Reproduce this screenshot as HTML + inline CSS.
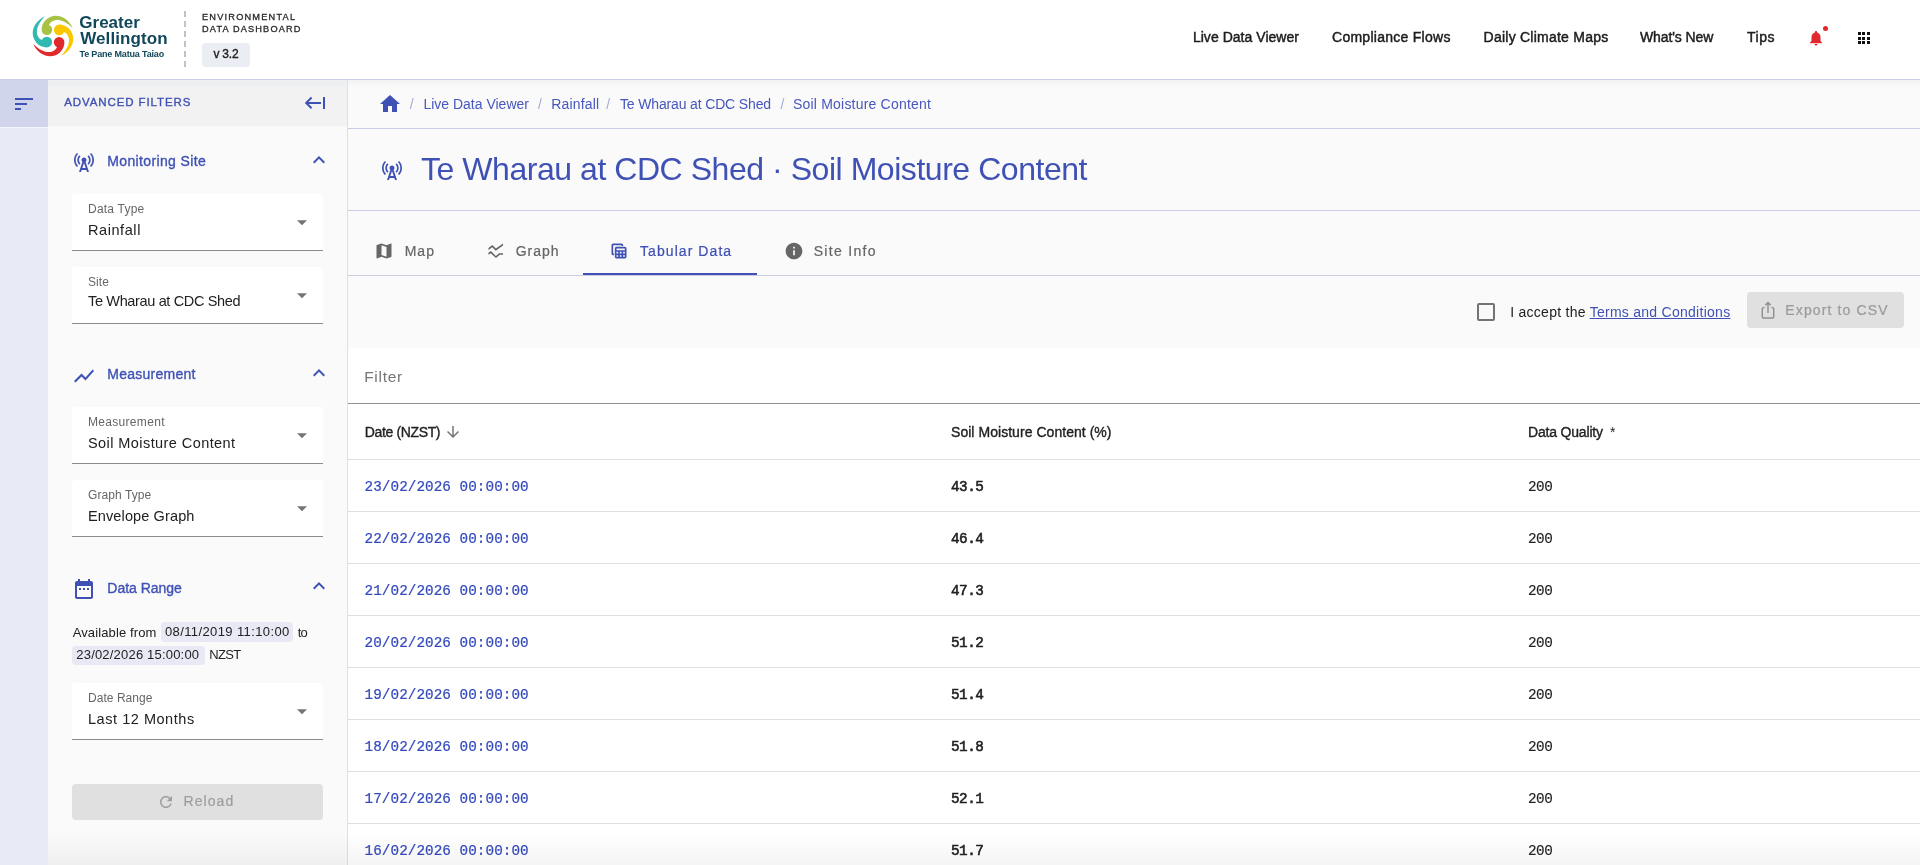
<!DOCTYPE html>
<html><head><meta charset="utf-8"><title>Environmental Data Dashboard</title>
<style>
html,body{margin:0;padding:0;width:1920px;height:865px;overflow:hidden;background:#fafafa;font-family:"Liberation Sans",sans-serif}
.t{position:absolute;white-space:nowrap}
svg{display:block}
</style></head><body><div style="position:absolute;left:0;top:0;width:1920px;height:865px;will-change:transform">
<div style="position:absolute;left:0px;top:0px;width:1920px;height:79px;background:#fff"></div>
<div style="position:absolute;left:0px;top:79px;width:1920px;height:1px;background:#c9cde8"></div>
<div style="position:absolute;left:0px;top:80px;width:48px;height:785px;background:#e8eaf6"></div>
<div style="position:absolute;left:0px;top:80px;width:48px;height:47px;background:#d1d5ec"></div>
<div style="position:absolute;left:0px;top:127px;width:48px;height:1px;background:#f4f5fb"></div>
<div style="position:absolute;left:48px;top:80px;width:299px;height:785px;background:#fafafa"></div>
<div style="position:absolute;left:48px;top:80px;width:299px;height:46px;background:#f2f2f2"></div>
<div style="position:absolute;left:48px;top:80px;width:299px;height:6px;background:#eeeff1"></div>
<div style="position:absolute;left:347px;top:80px;width:1px;height:785px;background:#e0e0e0"></div>
<div style="position:absolute;left:348px;top:80px;width:1572px;height:785px;background:#fafafa"></div>
<div style="position:absolute;left:348px;top:80px;width:1572px;height:8px;background:linear-gradient(#f3f3f4,#fafafa)"></div>
<div style="position:absolute;left:348px;top:128px;width:1572px;height:1px;background:#c9cde8"></div>
<div style="position:absolute;left:348px;top:210px;width:1572px;height:1px;background:#c9cde8"></div>
<div style="position:absolute;left:348px;top:275px;width:1572px;height:1px;background:#c9cde8"></div>
<div style="position:absolute;left:583px;top:273px;width:174px;height:2px;background:#3f51b5"></div>
<div style="position:absolute;left:348px;top:348px;width:1572px;height:517px;background:#fff;border-top-left-radius:4px"></div>
<div style="position:absolute;left:348px;top:403px;width:1572px;height:1px;background:#8f8f8f"></div>
<div style="position:absolute;left:348px;top:459px;width:1572px;height:1px;background:#e0e0e0"></div>
<div style="position:absolute;left:348px;top:511px;width:1572px;height:1px;background:#e0e0e0"></div>
<div style="position:absolute;left:348px;top:563px;width:1572px;height:1px;background:#e0e0e0"></div>
<div style="position:absolute;left:348px;top:615px;width:1572px;height:1px;background:#e0e0e0"></div>
<div style="position:absolute;left:348px;top:667px;width:1572px;height:1px;background:#e0e0e0"></div>
<div style="position:absolute;left:348px;top:719px;width:1572px;height:1px;background:#e0e0e0"></div>
<div style="position:absolute;left:348px;top:771px;width:1572px;height:1px;background:#e0e0e0"></div>
<div style="position:absolute;left:348px;top:823px;width:1572px;height:1px;background:#e0e0e0"></div>
<svg style="position:absolute;left:28px;top:11px" width="50" height="50" viewBox="-25 -25 50 50"><path fill="#a7c244" fill-rule="nonzero" transform="rotate(0)" d="M19.8,-8 C16,-16.2 9,-20.2 3,-20.3 C-5,-20.2 -11.4,-14 -11.4,-6.2 L-6.1,-6.2 L-4,-11 C-2,-16 7,-20.5 19.8,-8 Z M-11.4,-6.2 A5.3,5.3 0 1 0 -0.8,-6.2 A5.3,5.3 0 1 0 -11.4,-6.2 Z"/><path fill="#f9c800" fill-rule="nonzero" transform="rotate(90)" d="M19.8,-8 C16,-16.2 9,-20.2 3,-20.3 C-5,-20.2 -11.4,-14 -11.4,-6.2 L-6.1,-6.2 L-4,-11 C-2,-16 7,-20.5 19.8,-8 Z M-11.4,-6.2 A5.3,5.3 0 1 0 -0.8,-6.2 A5.3,5.3 0 1 0 -11.4,-6.2 Z"/><path fill="#e0292b" fill-rule="nonzero" transform="rotate(180)" d="M19.8,-8 C16,-16.2 9,-20.2 3,-20.3 C-5,-20.2 -11.4,-14 -11.4,-6.2 L-6.1,-6.2 L-4,-11 C-2,-16 7,-20.5 19.8,-8 Z M-11.4,-6.2 A5.3,5.3 0 1 0 -0.8,-6.2 A5.3,5.3 0 1 0 -11.4,-6.2 Z"/><path fill="#2fb9b1" fill-rule="nonzero" transform="rotate(270)" d="M19.8,-8 C16,-16.2 9,-20.2 3,-20.3 C-5,-20.2 -11.4,-14 -11.4,-6.2 L-6.1,-6.2 L-4,-11 C-2,-16 7,-20.5 19.8,-8 Z M-11.4,-6.2 A5.3,5.3 0 1 0 -0.8,-6.2 A5.3,5.3 0 1 0 -11.4,-6.2 Z"/></svg>
<div class="t" id="lg1" style="left:79.3px;top:13.13px;font-size:17px;line-height:19.55px;font-weight:700;color:#11475a;letter-spacing:0.0px;font-family:'Liberation Sans', sans-serif;">Greater</div>
<div class="t" id="lg2" style="left:80.2px;top:29.43px;font-size:17px;line-height:19.55px;font-weight:700;color:#11475a;letter-spacing:0.11px;font-family:'Liberation Sans', sans-serif;">Wellington</div>
<div class="t" id="lg3" style="left:79.5px;top:49.41px;font-size:9px;line-height:10.35px;font-weight:700;color:#11475a;letter-spacing:-0.167px;font-family:'Liberation Sans', sans-serif;">Te Pane Matua Taiao</div>
<div style="position:absolute;left:184px;top:11px;width:2px;height:56px;background:repeating-linear-gradient(#c2c2c2 0,#c2c2c2 6px,transparent 6px,transparent 10px)"></div>
<div class="t" id="env1" style="left:202px;top:11.92px;font-size:9.2px;line-height:10.58px;font-weight:400;color:#2a2a2a;letter-spacing:1.216px;font-family:'Liberation Sans', sans-serif;-webkit-text-stroke:0.3px currentColor;">ENVIRONMENTAL</div>
<div class="t" id="env2" style="left:202px;top:24.02px;font-size:9.2px;line-height:10.58px;font-weight:400;color:#2a2a2a;letter-spacing:1.154px;font-family:'Liberation Sans', sans-serif;-webkit-text-stroke:0.3px currentColor;">DATA DASHBOARD</div>
<div style="position:absolute;left:202px;top:43px;width:48px;height:24px;background:#ebedf4;border-radius:4px"></div>
<div class="t" id="ver" style="left:213.4px;top:47.84px;font-size:12px;line-height:13.8px;font-weight:400;color:#212121;letter-spacing:-0.2px;font-family:'Liberation Sans', sans-serif;-webkit-text-stroke:0.35px currentColor;">v 3.2</div>
<div class="t" id="nav0" style="left:1192.9px;top:29.20px;font-size:14px;line-height:16.1px;font-weight:400;color:#1c1c1c;letter-spacing:0.034px;font-family:'Liberation Sans', sans-serif;-webkit-text-stroke:0.45px currentColor;">Live Data Viewer</div>
<div class="t" id="nav1" style="left:1332px;top:29.20px;font-size:14px;line-height:16.1px;font-weight:400;color:#1c1c1c;letter-spacing:0.267px;font-family:'Liberation Sans', sans-serif;-webkit-text-stroke:0.45px currentColor;">Compliance Flows</div>
<div class="t" id="nav2" style="left:1483.6px;top:29.20px;font-size:14px;line-height:16.1px;font-weight:400;color:#1c1c1c;letter-spacing:0.237px;font-family:'Liberation Sans', sans-serif;-webkit-text-stroke:0.45px currentColor;">Daily Climate Maps</div>
<div class="t" id="nav3" style="left:1640px;top:29.20px;font-size:14px;line-height:16.1px;font-weight:400;color:#1c1c1c;letter-spacing:-0.111px;font-family:'Liberation Sans', sans-serif;-webkit-text-stroke:0.45px currentColor;">What's New</div>
<div class="t" id="nav4" style="left:1747px;top:29.20px;font-size:14px;line-height:16.1px;font-weight:400;color:#1c1c1c;letter-spacing:0.5px;font-family:'Liberation Sans', sans-serif;-webkit-text-stroke:0.45px currentColor;">Tips</div>
<svg style="position:absolute;left:1807px;top:29.1px;" width="18" height="18" viewBox="0 0 24 24"><path fill="#e0282e" d="M12 22c1.1 0 2-.9 2-2h-4c0 1.1.89 2 2 2zm6-6v-5c0-3.07-1.64-5.64-4.5-6.32V4c0-.83-.67-1.5-1.5-1.5s-1.5.67-1.5 1.5v.68C7.63 5.36 6 7.92 6 11v5l-2 2v1h16v-1l-2-2z"/></svg>
<div style="position:absolute;left:1822.9px;top:25.8px;width:5.2px;height:5.2px;border-radius:50%;background:#e0282e"></div>
<div style="position:absolute;left:1858.0px;top:32.0px;width:3px;height:3px;background:#111"></div>
<div style="position:absolute;left:1862.3px;top:32.0px;width:3px;height:3px;background:#111"></div>
<div style="position:absolute;left:1867.0px;top:32.0px;width:3px;height:3px;background:#111"></div>
<div style="position:absolute;left:1858.0px;top:36.5px;width:3px;height:3px;background:#111"></div>
<div style="position:absolute;left:1862.3px;top:36.5px;width:3px;height:3px;background:#111"></div>
<div style="position:absolute;left:1867.0px;top:36.5px;width:3px;height:3px;background:#111"></div>
<div style="position:absolute;left:1858.0px;top:41.0px;width:3px;height:3px;background:#111"></div>
<div style="position:absolute;left:1862.3px;top:41.0px;width:3px;height:3px;background:#111"></div>
<div style="position:absolute;left:1867.0px;top:41.0px;width:3px;height:3px;background:#111"></div>
<svg style="position:absolute;left:12px;top:92px;" width="24" height="24" viewBox="0 0 24 24"><path fill="#3f51b5" d="M3 18h6v-2H3v2zM3 6v2h18V6H3zm0 7h12v-2H3v2z"/></svg>
<div class="t" id="adv" style="left:64.2px;top:96.01px;font-size:11.5px;line-height:13.22px;font-weight:400;color:#3f51b5;letter-spacing:0.899px;font-family:'Liberation Sans', sans-serif;-webkit-text-stroke:0.35px currentColor;">ADVANCED FILTERS</div>
<svg style="position:absolute;left:300px;top:90px" width="30" height="24" viewBox="0 0 30 24"><path fill="none" stroke="#3f51b5" stroke-width="2" d="M6.5 12.9H21M11.6 7.5L6.2 12.9L11.6 18.3"/><rect x="23" y="7" width="2" height="12" fill="#3f51b5"/></svg>
<svg style="position:absolute;left:72px;top:150px;" width="24" height="24" viewBox="0 0 24 24"><path fill="#3f51b5" d="M7.3 14.7l1.2-1.2c-1-1-1.5-2.3-1.5-3.5 0-1.3.5-2.6 1.5-3.5L7.3 5.3c-1.3 1.3-2 3-2 4.7s.7 3.4 2 4.7zM19.1 2.9l-1.2 1.2c1.6 1.6 2.4 3.8 2.4 5.9 0 2.1-.8 4.3-2.4 5.9l1.2 1.2c2-2 2.9-4.5 2.9-7.1 0-2.6-1-5.1-2.9-7.1zM6.1 4.1L4.9 2.9C3 4.9 2 7.4 2 10c0 2.6 1 5.1 2.9 7.1l1.2-1.2c-1.6-1.6-2.4-3.8-2.4-5.9 0-2.1.8-4.3 2.4-5.9zM16.7 14.7c1.3-1.3 2-3 2-4.7-.1-1.7-.7-3.4-2-4.7l-1.2 1.2c1 1 1.5 2.3 1.5 3.5 0 1.3-.5 2.6-1.5 3.5l1.2 1.2zM14.5 10c0-1.38-1.12-2.5-2.5-2.5S9.5 8.62 9.5 10c0 .76.34 1.42.87 1.88L7 22h2l.67-2h4.67l.66 2h2l-3.37-10.12c.53-.46.87-1.12.87-1.88zm-4.17 8L12 13l1.67 5h-3.34z"/></svg>
<div class="t" id="sec1" style="left:107.3px;top:153.10px;font-size:14px;line-height:16.1px;font-weight:400;color:#3f51b5;letter-spacing:0.358px;font-family:'Liberation Sans', sans-serif;-webkit-text-stroke:0.35px currentColor;">Monitoring Site</div>
<svg style="position:absolute;left:307px;top:148px;" width="24" height="24" viewBox="0 0 24 24"><path fill="#3f51b5" d="M12 8l-6 6 1.41 1.41L12 10.83l4.59 4.58L18 14z"/></svg>
<div style="position:absolute;left:72px;top:194px;width:251px;height:56px;background:#fff;border-radius:4px 4px 0 0;border-bottom:1px solid #8c8c8c;box-sizing:border-box;height:57px"></div>
<div class="t" id="l1" style="left:88px;top:202.54px;font-size:12px;line-height:13.8px;font-weight:400;color:#666;letter-spacing:0.225px;font-family:'Liberation Sans', sans-serif;">Data Type</div>
<div class="t" id="v1" style="left:88px;top:222.44px;font-size:14.5px;line-height:16.67px;font-weight:400;color:#212121;letter-spacing:0.572px;font-family:'Liberation Sans', sans-serif;">Rainfall</div>
<svg style="position:absolute;left:297px;top:219.5px" width="10" height="5.5" viewBox="0 0 10 5"><path fill="#757575" d="M0 0h10L5 5z"/></svg>
<div style="position:absolute;left:72px;top:267px;width:251px;height:56px;background:#fff;border-radius:4px 4px 0 0;border-bottom:1px solid #8c8c8c;box-sizing:border-box;height:57px"></div>
<div class="t" id="l2" style="left:88px;top:275.74px;font-size:12px;line-height:13.8px;font-weight:400;color:#666;letter-spacing:0.1px;font-family:'Liberation Sans', sans-serif;">Site</div>
<div class="t" id="v2" style="left:88px;top:293.14px;font-size:14.5px;line-height:16.67px;font-weight:400;color:#212121;letter-spacing:-0.35px;font-family:'Liberation Sans', sans-serif;">Te Wharau at CDC Shed</div>
<svg style="position:absolute;left:297px;top:292.5px" width="10" height="5.5" viewBox="0 0 10 5"><path fill="#757575" d="M0 0h10L5 5z"/></svg>
<svg style="position:absolute;left:72px;top:363.5px;" width="24" height="24" viewBox="0 0 24 24"><path fill="#3f51b5" d="M3.5 18.49l6-6.01 4 4L22 6.92l-1.41-1.41-7.09 7.97-4-4L2 16.99z"/></svg>
<div class="t" id="sec2" style="left:107.3px;top:366.20px;font-size:14px;line-height:16.1px;font-weight:400;color:#3f51b5;letter-spacing:0.25px;font-family:'Liberation Sans', sans-serif;-webkit-text-stroke:0.35px currentColor;">Measurement</div>
<svg style="position:absolute;left:307px;top:361px;" width="24" height="24" viewBox="0 0 24 24"><path fill="#3f51b5" d="M12 8l-6 6 1.41 1.41L12 10.83l4.59 4.58L18 14z"/></svg>
<div style="position:absolute;left:72px;top:407px;width:251px;height:56px;background:#fff;border-radius:4px 4px 0 0;border-bottom:1px solid #8c8c8c;box-sizing:border-box;height:57px"></div>
<div class="t" id="l3" style="left:88px;top:415.74px;font-size:12px;line-height:13.8px;font-weight:400;color:#666;letter-spacing:0.31px;font-family:'Liberation Sans', sans-serif;">Measurement</div>
<div class="t" id="v3" style="left:88px;top:435.14px;font-size:14.5px;line-height:16.67px;font-weight:400;color:#212121;letter-spacing:0.425px;font-family:'Liberation Sans', sans-serif;">Soil Moisture Content</div>
<svg style="position:absolute;left:297px;top:432.5px" width="10" height="5.5" viewBox="0 0 10 5"><path fill="#757575" d="M0 0h10L5 5z"/></svg>
<div style="position:absolute;left:72px;top:480px;width:251px;height:56px;background:#fff;border-radius:4px 4px 0 0;border-bottom:1px solid #8c8c8c;box-sizing:border-box;height:57px"></div>
<div class="t" id="l4" style="left:88px;top:488.74px;font-size:12px;line-height:13.8px;font-weight:400;color:#666;letter-spacing:0.089px;font-family:'Liberation Sans', sans-serif;">Graph Type</div>
<div class="t" id="v4" style="left:88px;top:508.44px;font-size:14.5px;line-height:16.67px;font-weight:400;color:#212121;letter-spacing:0.123px;font-family:'Liberation Sans', sans-serif;">Envelope Graph</div>
<svg style="position:absolute;left:297px;top:505.5px" width="10" height="5.5" viewBox="0 0 10 5"><path fill="#757575" d="M0 0h10L5 5z"/></svg>
<svg style="position:absolute;left:71.8px;top:577px;" width="24" height="24" viewBox="0 0 24 24"><path fill="#3f51b5" d="M9 11H7v2h2v-2zm4 0h-2v2h2v-2zm4 0h-2v2h2v-2zm2-7h-1V2h-2v2H8V2H6v2H5c-1.11 0-1.99.9-1.99 2L3 20c0 1.1.89 2 2 2h14c1.1 0 2-.9 2-2V6c0-1.1-.9-2-2-2zm0 16H5V9h14v11z"/></svg>
<div class="t" id="sec3" style="left:107.3px;top:579.60px;font-size:14px;line-height:16.1px;font-weight:400;color:#3f51b5;letter-spacing:-0.022px;font-family:'Liberation Sans', sans-serif;-webkit-text-stroke:0.35px currentColor;">Data Range</div>
<svg style="position:absolute;left:307px;top:574.2px;" width="24" height="24" viewBox="0 0 24 24"><path fill="#3f51b5" d="M12 8l-6 6 1.41 1.41L12 10.83l4.59 4.58L18 14z"/></svg>
<div class="t" id="avail" style="left:72.7px;top:625.72px;font-size:13px;line-height:14.95px;font-weight:400;color:#212121;letter-spacing:0.116px;font-family:'Liberation Sans', sans-serif;">Available from</div>
<div style="position:absolute;left:161.3px;top:622px;width:132.2px;height:19.7px;background:#e8e9f4;border-radius:4px"></div>
<div class="t" id="chip1" style="left:164.9px;top:624.62px;font-size:13px;line-height:14.95px;font-weight:400;color:#212121;letter-spacing:0.389px;font-family:'Liberation Sans', sans-serif;">08/11/2019 11:10:00</div>
<div class="t" id="to" style="left:297.8px;top:625.72px;font-size:13px;line-height:14.95px;font-weight:400;color:#212121;letter-spacing:-1.0px;font-family:'Liberation Sans', sans-serif;">to</div>
<div style="position:absolute;left:72px;top:646px;width:133px;height:18.5px;background:#e8e9f4;border-radius:4px"></div>
<div class="t" id="chip2" style="left:76.3px;top:648.42px;font-size:13px;line-height:14.95px;font-weight:400;color:#212121;letter-spacing:0.194px;font-family:'Liberation Sans', sans-serif;">23/02/2026 15:00:00</div>
<div class="t" id="nzst" style="left:209.2px;top:648.42px;font-size:13px;line-height:14.95px;font-weight:400;color:#212121;letter-spacing:-0.666px;font-family:'Liberation Sans', sans-serif;">NZST</div>
<div style="position:absolute;left:72px;top:683px;width:251px;height:56px;background:#fff;border-radius:4px 4px 0 0;border-bottom:1px solid #8c8c8c;box-sizing:border-box;height:57px"></div>
<div class="t" id="l5" style="left:88px;top:691.74px;font-size:12px;line-height:13.8px;font-weight:400;color:#666;letter-spacing:0.044px;font-family:'Liberation Sans', sans-serif;">Date Range</div>
<div class="t" id="v5" style="left:88px;top:711.24px;font-size:14.5px;line-height:16.67px;font-weight:400;color:#212121;letter-spacing:0.538px;font-family:'Liberation Sans', sans-serif;">Last 12 Months</div>
<svg style="position:absolute;left:297px;top:708.5px" width="10" height="5.5" viewBox="0 0 10 5"><path fill="#757575" d="M0 0h10L5 5z"/></svg>
<div style="position:absolute;left:72px;top:784px;width:251px;height:36px;background:#e0e0e0;border-radius:4px"></div>
<svg style="position:absolute;left:156.7px;top:792.6px;" width="18" height="18" viewBox="0 0 24 24"><path fill="#9e9e9e" d="M17.65 6.35C16.2 4.9 14.21 4 12 4c-4.42 0-7.99 3.58-7.99 8s3.57 8 7.99 8c3.73 0 6.84-2.55 7.73-6h-2.08c-.82 2.33-3.04 4-5.65 4-3.31 0-6-2.69-6-6s2.69-6 6-6c1.66 0 3.14.69 4.22 1.78L13 11h7V4l-2.35 2.35z"/></svg>
<div class="t" id="reload" style="left:183.6px;top:792.80px;font-size:14px;line-height:16.1px;font-weight:400;color:#9e9e9e;letter-spacing:1.05px;font-family:'Liberation Sans', sans-serif;-webkit-text-stroke:0.22px currentColor;">Reload</div>
<svg style="position:absolute;left:378px;top:92px;" width="24" height="24" viewBox="0 0 24 24"><path fill="#3f51b5" d="M10 20v-6h4v6h5v-8h3L12 3 2 12h3v8z"/></svg>
<div class="t" id="cr0" style="left:423.4px;top:96.10px;font-size:14px;line-height:16.1px;font-weight:400;color:#4757bd;letter-spacing:0.0px;font-family:'Liberation Sans', sans-serif;">Live Data Viewer</div>
<div class="t" id="cr1" style="left:551.2px;top:96.10px;font-size:14px;line-height:16.1px;font-weight:400;color:#4757bd;letter-spacing:0.177px;font-family:'Liberation Sans', sans-serif;">Rainfall</div>
<div class="t" id="cr2" style="left:620px;top:96.10px;font-size:14px;line-height:16.1px;font-weight:400;color:#4757bd;letter-spacing:-0.15px;font-family:'Liberation Sans', sans-serif;">Te Wharau at CDC Shed</div>
<div class="t" id="cr3" style="left:793px;top:96.10px;font-size:14px;line-height:16.1px;font-weight:400;color:#4757bd;letter-spacing:0.2px;font-family:'Liberation Sans', sans-serif;">Soil Moisture Content</div>
<div class="t" id="sl0" style="left:409.8px;top:96.10px;font-size:14px;line-height:16.1px;font-weight:400;color:#a4acdc;letter-spacing:0px;font-family:'Liberation Sans', sans-serif;">/</div>
<div class="t" id="sl1" style="left:538px;top:96.10px;font-size:14px;line-height:16.1px;font-weight:400;color:#a4acdc;letter-spacing:0px;font-family:'Liberation Sans', sans-serif;">/</div>
<div class="t" id="sl2" style="left:606.2px;top:96.10px;font-size:14px;line-height:16.1px;font-weight:400;color:#a4acdc;letter-spacing:0px;font-family:'Liberation Sans', sans-serif;">/</div>
<div class="t" id="sl3" style="left:780.5px;top:96.10px;font-size:14px;line-height:16.1px;font-weight:400;color:#a4acdc;letter-spacing:0px;font-family:'Liberation Sans', sans-serif;">/</div>
<svg style="position:absolute;left:380px;top:158px;" width="24" height="24" viewBox="0 0 24 24"><path fill="#3f51b5" d="M7.3 14.7l1.2-1.2c-1-1-1.5-2.3-1.5-3.5 0-1.3.5-2.6 1.5-3.5L7.3 5.3c-1.3 1.3-2 3-2 4.7s.7 3.4 2 4.7zM19.1 2.9l-1.2 1.2c1.6 1.6 2.4 3.8 2.4 5.9 0 2.1-.8 4.3-2.4 5.9l1.2 1.2c2-2 2.9-4.5 2.9-7.1 0-2.6-1-5.1-2.9-7.1zM6.1 4.1L4.9 2.9C3 4.9 2 7.4 2 10c0 2.6 1 5.1 2.9 7.1l1.2-1.2c-1.6-1.6-2.4-3.8-2.4-5.9 0-2.1.8-4.3 2.4-5.9zM16.7 14.7c1.3-1.3 2-3 2-4.7-.1-1.7-.7-3.4-2-4.7l-1.2 1.2c1 1 1.5 2.3 1.5 3.5 0 1.3-.5 2.6-1.5 3.5l1.2 1.2zM14.5 10c0-1.38-1.12-2.5-2.5-2.5S9.5 8.62 9.5 10c0 .76.34 1.42.87 1.88L7 22h2l.67-2h4.67l.66 2h2l-3.37-10.12c.53-.46.87-1.12.87-1.88zm-4.17 8L12 13l1.67 5h-3.34z"/></svg>
<div class="t" id="title" style="left:421px;top:151.11px;font-size:32px;line-height:36.8px;font-weight:400;color:#3f51b5;letter-spacing:-0.455px;font-family:'Liberation Sans', sans-serif;">Te Wharau at CDC Shed · Soil Moisture Content</div>
<svg style="position:absolute;left:373.5px;top:240.8px;" width="20" height="20" viewBox="0 0 24 24"><path fill="#666" d="M20.5 3l-.16.03L15 5.1 9 3 3.36 4.9c-.21.07-.36.25-.36.48V20.5c0 .28.22.5.5.5l.16-.03L9 18.9l6 2.1 5.64-1.9c.21-.07.36-.25.36-.48V3.5c0-.28-.22-.5-.5-.5zM15 19l-6-2.11V5l6 2.11V19z"/></svg>
<div class="t" id="tab1" style="left:404.7px;top:243.20px;font-size:14px;line-height:16.1px;font-weight:400;color:#666;letter-spacing:1.0px;font-family:'Liberation Sans', sans-serif;-webkit-text-stroke:0.22px currentColor;">Map</div>
<svg style="position:absolute;left:485.6px;top:240.9px;" width="19.5" height="19.5" viewBox="0 0 24 24"><path fill="#666" d="M21 5.47L12 12 7.62 7.62 3 11V8.52L7.83 5l4.38 4.38L21 3v2.47zM21 15h-4.7l-4.17 3.34L6 12.41l-3 2.13V17l2.8-2 6.45 6L17 17h4v-2z"/></svg>
<div class="t" id="tab2" style="left:515.7px;top:243.20px;font-size:14px;line-height:16.1px;font-weight:400;color:#666;letter-spacing:1.0px;font-family:'Liberation Sans', sans-serif;-webkit-text-stroke:0.22px currentColor;">Graph</div>
<svg style="position:absolute;left:609.2px;top:240.8px;" width="20" height="20" viewBox="0 0 24 24"><path fill="#3f51b5" d="M19 7H9c-1.1 0-2 .9-2 2v10c0 1.1.9 2 2 2h10c1.1 0 2-.9 2-2V9c0-1.1-.9-2-2-2zm0 2v2H9V9h10zm-6 6v-2h2v2h-2zm2 2v2h-2v-2h2zm-4-2H9v-2h2v2zm6-2h2v2h-2v-2zm-8 4h2v2H9v-2zm8 2v-2h2v2h-2zM6 17H5c-1.1 0-2-.9-2-2V5c0-1.1.9-2 2-2h10c1.1 0 2 .9 2 2v1h-2V5H5v10h1v2z"/></svg>
<div class="t" id="tab3" style="left:640px;top:243.20px;font-size:14px;line-height:16.1px;font-weight:400;color:#3f51b5;letter-spacing:1.068px;font-family:'Liberation Sans', sans-serif;-webkit-text-stroke:0.22px currentColor;">Tabular Data</div>
<svg style="position:absolute;left:783.6px;top:241.1px;" width="20" height="20" viewBox="0 0 24 24"><path fill="#666" d="M12 2C6.48 2 2 6.48 2 12s4.48 10 10 10 10-4.48 10-10S17.52 2 12 2zm1 15h-2v-6h2v6zm0-8h-2V7h2v2z"/></svg>
<div class="t" id="tab4" style="left:813.7px;top:243.20px;font-size:14px;line-height:16.1px;font-weight:400;color:#666;letter-spacing:1.31px;font-family:'Liberation Sans', sans-serif;-webkit-text-stroke:0.22px currentColor;">Site Info</div>
<div style="position:absolute;left:1477px;top:303px;width:18px;height:18px;box-sizing:border-box;border:2px solid #727272;border-radius:2px"></div>
<div class="t" id="accept" style="left:1510.2px;top:304.00px;font-size:14px;line-height:16.1px;font-weight:400;color:#212121;letter-spacing:0.266px;font-family:'Liberation Sans', sans-serif;">I accept the <span style="color:#3f51b5;text-decoration:underline">Terms and Conditions</span></div>
<div style="position:absolute;left:1747px;top:292px;width:157px;height:36px;background:#e0e0e0;border-radius:4px"></div>
<svg style="position:absolute;left:1755px;top:296px" width="30" height="28" viewBox="1755 296 30 28"><path fill="none" stroke="#8e8e8e" stroke-width="1.4" d="M1764.6 307.6H1763.3a1 1 0 0 0 -1 1V317a1 1 0 0 0 1 1H1772.7a1 1 0 0 0 1 -1V308.6a1 1 0 0 0 -1 -1H1771.4M1768 302.8V313M1765.3 305.3L1768 302.5L1770.7 305.3"/></svg>
<div class="t" id="export" style="left:1785.3px;top:301.90px;font-size:14px;line-height:16.1px;font-weight:400;color:#9b9b9b;letter-spacing:1.125px;font-family:'Liberation Sans', sans-serif;-webkit-text-stroke:0.22px currentColor;">Export to CSV</div>
<div class="t" id="filter" style="left:364.2px;top:367.72px;font-size:15.5px;line-height:17.82px;font-weight:400;color:#757575;letter-spacing:0.7px;font-family:'Liberation Sans', sans-serif;">Filter</div>
<div class="t" id="h1" style="left:364.7px;top:423.90px;font-size:14px;line-height:16.1px;font-weight:400;color:#212121;letter-spacing:-0.35px;font-family:'Liberation Sans', sans-serif;-webkit-text-stroke:0.35px currentColor;">Date (NZST)</div>
<svg style="position:absolute;left:444px;top:423px;" width="18" height="18" viewBox="0 0 24 24"><path fill="#757575" d="M20 12l-1.41-1.41L13 16.17V4h-2v12.17l-5.58-5.59L4 12l8 8 8-8z"/></svg>
<div class="t" id="h2" style="left:951px;top:424.20px;font-size:14px;line-height:16.1px;font-weight:400;color:#212121;letter-spacing:0.042px;font-family:'Liberation Sans', sans-serif;-webkit-text-stroke:0.35px currentColor;">Soil Moisture Content (%)</div>
<div class="t" id="h3" style="left:1528px;top:424.20px;font-size:14px;line-height:16.1px;font-weight:400;color:#212121;letter-spacing:-0.181px;font-family:'Liberation Sans', sans-serif;-webkit-text-stroke:0.35px currentColor;">Data Quality</div>
<div class="t" id="h3s" style="left:1610px;top:424.20px;font-size:14px;line-height:16.1px;font-weight:400;color:#212121;letter-spacing:0px;font-family:'Liberation Sans', sans-serif;">*</div>
<div class="t" id="d0" style="left:364.6px;top:479.02px;font-size:14.3px;line-height:16.45px;font-weight:400;color:#3349bd;letter-spacing:0.056px;font-family:'Liberation Mono', monospace;-webkit-text-stroke:0.22px currentColor;">23/02/2026 00:00:00</div>
<div class="t" id="m0" style="left:951px;top:479.02px;font-size:14.3px;line-height:16.45px;font-weight:400;color:#212121;letter-spacing:-0.499px;font-family:'Liberation Mono', monospace;-webkit-text-stroke:0.55px currentColor;">43.5</div>
<div class="t" id="q0" style="left:1528px;top:479.02px;font-size:14.3px;line-height:16.45px;font-weight:400;color:#212121;letter-spacing:-0.5px;font-family:'Liberation Mono', monospace;-webkit-text-stroke:0.15px currentColor;">200</div>
<div class="t" id="d1" style="left:364.6px;top:531.02px;font-size:14.3px;line-height:16.45px;font-weight:400;color:#3349bd;letter-spacing:0.056px;font-family:'Liberation Mono', monospace;-webkit-text-stroke:0.22px currentColor;">22/02/2026 00:00:00</div>
<div class="t" id="m1" style="left:951px;top:531.02px;font-size:14.3px;line-height:16.45px;font-weight:400;color:#212121;letter-spacing:-0.499px;font-family:'Liberation Mono', monospace;-webkit-text-stroke:0.55px currentColor;">46.4</div>
<div class="t" id="q1" style="left:1528px;top:531.02px;font-size:14.3px;line-height:16.45px;font-weight:400;color:#212121;letter-spacing:-0.5px;font-family:'Liberation Mono', monospace;-webkit-text-stroke:0.15px currentColor;">200</div>
<div class="t" id="d2" style="left:364.6px;top:583.02px;font-size:14.3px;line-height:16.45px;font-weight:400;color:#3349bd;letter-spacing:0.056px;font-family:'Liberation Mono', monospace;-webkit-text-stroke:0.22px currentColor;">21/02/2026 00:00:00</div>
<div class="t" id="m2" style="left:951px;top:583.02px;font-size:14.3px;line-height:16.45px;font-weight:400;color:#212121;letter-spacing:-0.499px;font-family:'Liberation Mono', monospace;-webkit-text-stroke:0.55px currentColor;">47.3</div>
<div class="t" id="q2" style="left:1528px;top:583.02px;font-size:14.3px;line-height:16.45px;font-weight:400;color:#212121;letter-spacing:-0.5px;font-family:'Liberation Mono', monospace;-webkit-text-stroke:0.15px currentColor;">200</div>
<div class="t" id="d3" style="left:364.6px;top:635.02px;font-size:14.3px;line-height:16.45px;font-weight:400;color:#3349bd;letter-spacing:0.056px;font-family:'Liberation Mono', monospace;-webkit-text-stroke:0.22px currentColor;">20/02/2026 00:00:00</div>
<div class="t" id="m3" style="left:951px;top:635.02px;font-size:14.3px;line-height:16.45px;font-weight:400;color:#212121;letter-spacing:-0.499px;font-family:'Liberation Mono', monospace;-webkit-text-stroke:0.55px currentColor;">51.2</div>
<div class="t" id="q3" style="left:1528px;top:635.02px;font-size:14.3px;line-height:16.45px;font-weight:400;color:#212121;letter-spacing:-0.5px;font-family:'Liberation Mono', monospace;-webkit-text-stroke:0.15px currentColor;">200</div>
<div class="t" id="d4" style="left:364.6px;top:687.02px;font-size:14.3px;line-height:16.45px;font-weight:400;color:#3349bd;letter-spacing:0.056px;font-family:'Liberation Mono', monospace;-webkit-text-stroke:0.22px currentColor;">19/02/2026 00:00:00</div>
<div class="t" id="m4" style="left:951px;top:687.02px;font-size:14.3px;line-height:16.45px;font-weight:400;color:#212121;letter-spacing:-0.499px;font-family:'Liberation Mono', monospace;-webkit-text-stroke:0.55px currentColor;">51.4</div>
<div class="t" id="q4" style="left:1528px;top:687.02px;font-size:14.3px;line-height:16.45px;font-weight:400;color:#212121;letter-spacing:-0.5px;font-family:'Liberation Mono', monospace;-webkit-text-stroke:0.15px currentColor;">200</div>
<div class="t" id="d5" style="left:364.6px;top:739.02px;font-size:14.3px;line-height:16.45px;font-weight:400;color:#3349bd;letter-spacing:0.056px;font-family:'Liberation Mono', monospace;-webkit-text-stroke:0.22px currentColor;">18/02/2026 00:00:00</div>
<div class="t" id="m5" style="left:951px;top:739.02px;font-size:14.3px;line-height:16.45px;font-weight:400;color:#212121;letter-spacing:-0.499px;font-family:'Liberation Mono', monospace;-webkit-text-stroke:0.55px currentColor;">51.8</div>
<div class="t" id="q5" style="left:1528px;top:739.02px;font-size:14.3px;line-height:16.45px;font-weight:400;color:#212121;letter-spacing:-0.5px;font-family:'Liberation Mono', monospace;-webkit-text-stroke:0.15px currentColor;">200</div>
<div class="t" id="d6" style="left:364.6px;top:791.02px;font-size:14.3px;line-height:16.45px;font-weight:400;color:#3349bd;letter-spacing:0.056px;font-family:'Liberation Mono', monospace;-webkit-text-stroke:0.22px currentColor;">17/02/2026 00:00:00</div>
<div class="t" id="m6" style="left:951px;top:791.02px;font-size:14.3px;line-height:16.45px;font-weight:400;color:#212121;letter-spacing:-0.499px;font-family:'Liberation Mono', monospace;-webkit-text-stroke:0.55px currentColor;">52.1</div>
<div class="t" id="q6" style="left:1528px;top:791.02px;font-size:14.3px;line-height:16.45px;font-weight:400;color:#212121;letter-spacing:-0.5px;font-family:'Liberation Mono', monospace;-webkit-text-stroke:0.15px currentColor;">200</div>
<div class="t" id="d7" style="left:364.6px;top:843.02px;font-size:14.3px;line-height:16.45px;font-weight:400;color:#3349bd;letter-spacing:0.056px;font-family:'Liberation Mono', monospace;-webkit-text-stroke:0.22px currentColor;">16/02/2026 00:00:00</div>
<div class="t" id="m7" style="left:951px;top:843.02px;font-size:14.3px;line-height:16.45px;font-weight:400;color:#212121;letter-spacing:-0.499px;font-family:'Liberation Mono', monospace;-webkit-text-stroke:0.55px currentColor;">51.7</div>
<div class="t" id="q7" style="left:1528px;top:843.02px;font-size:14.3px;line-height:16.45px;font-weight:400;color:#212121;letter-spacing:-0.5px;font-family:'Liberation Mono', monospace;-webkit-text-stroke:0.15px currentColor;">200</div>
<div style="position:absolute;left:48px;top:832px;width:1872px;height:33px;background:linear-gradient(rgba(0,0,0,0),rgba(0,0,0,0.045))"></div>
</div></body></html>
